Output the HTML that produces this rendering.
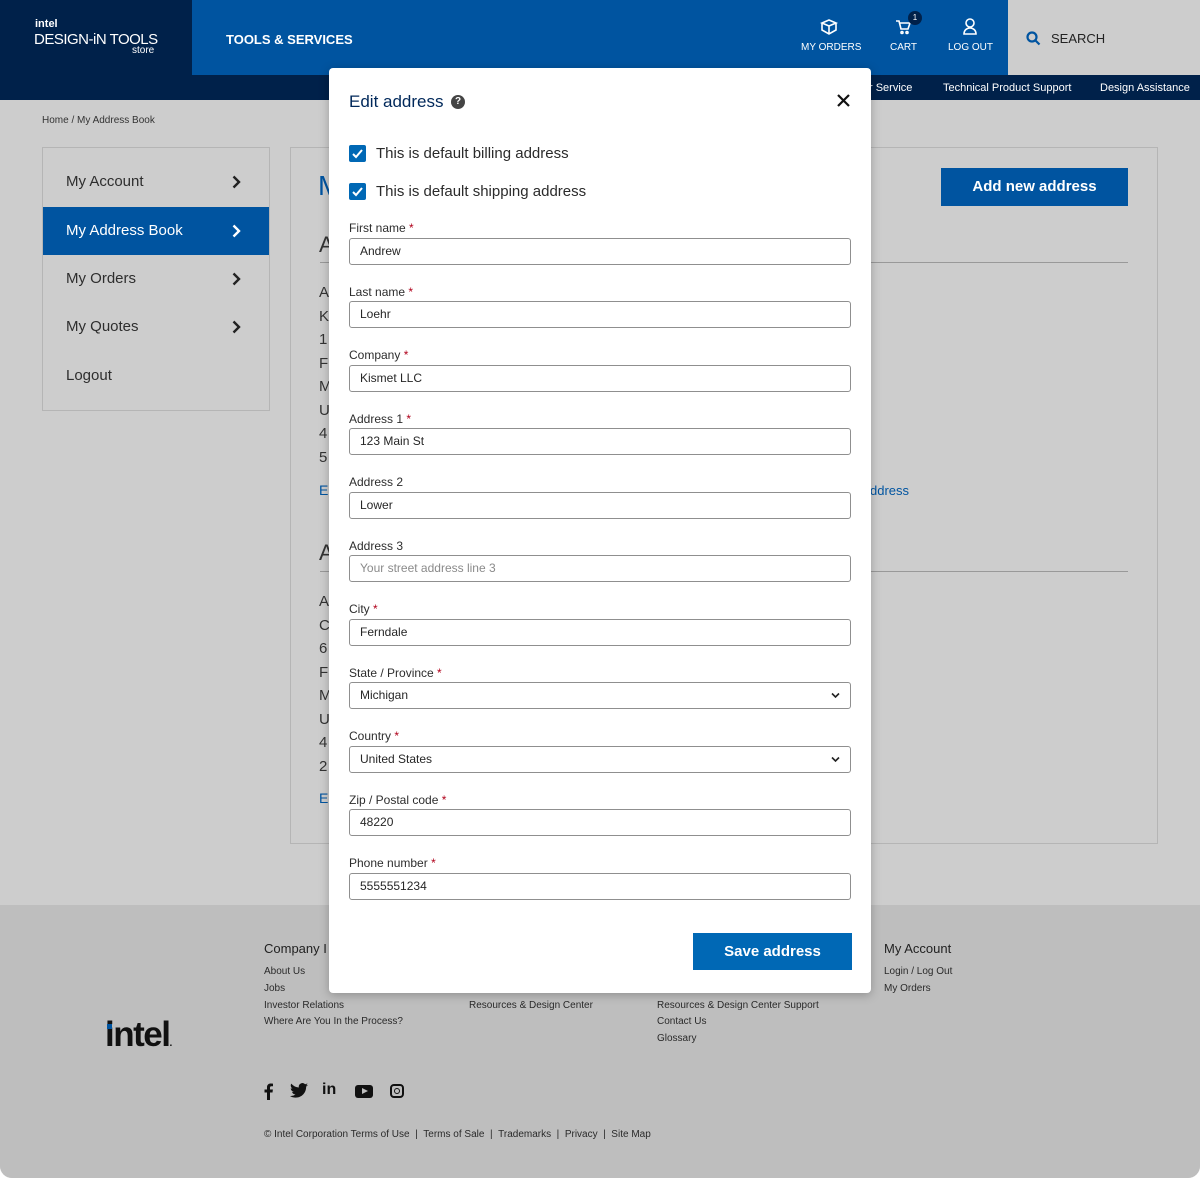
<!DOCTYPE html>
<html><head><meta charset="utf-8"><style>
*{box-sizing:border-box;margin:0;padding:0}
body{width:1200px;height:1178px;position:relative;overflow:hidden;background:#fff;font-family:"Liberation Sans",sans-serif;color:#2b2b2b}
.a{position:absolute}
.page{position:absolute;left:0;top:0;width:1200px;height:1178px;background:#cdcdcd;border-radius:0 0 12px 12px;overflow:hidden}
.t{position:absolute;white-space:nowrap}
.side div{position:absolute;left:0;width:226px;height:48px;font-size:15px;color:#2e2e2e;padding-left:23px;line-height:48px}
.chev{position:absolute;right:28px;top:17px}
.lbl{position:absolute;left:20px;font-size:12px;color:#2d2d2d}
.lbl b{color:#b0001a;font-weight:normal}
.inp{position:absolute;left:20px;width:502px;height:27px;border:1px solid #8f8f8f;border-radius:3px;font-size:12px;line-height:25px;padding-left:10px;color:#262626}
.ft{position:absolute;font-size:10px;color:#2a2a2a;white-space:nowrap}
</style></head><body>
<div class="page">
 <div class="a" style="left:0;top:0;width:1200px;height:100px;background:#00214a"></div>
 <div class="a" style="left:192px;top:0;width:816px;height:75px;background:#0054a0"></div>
 <div class="a" style="left:1008px;top:0;width:192px;height:75px;background:#cdcdcd"></div>
 <div class="t" style="left:35px;top:18px;font-size:11px;color:#fff;font-weight:bold">intel</div>
 <div class="t" style="left:34px;top:31px;font-size:15px;color:#fff;letter-spacing:-0.5px">DESIGN-iN TOOLS</div>
 <div class="t" style="left:132px;top:45px;font-size:10px;color:#fff">store</div>
 <div class="t" style="left:226px;top:32px;font-size:13px;color:#fff;font-weight:bold">TOOLS &amp; SERVICES</div>
 <svg class="a" style="left:819px;top:18px" width="20" height="18" viewBox="0 0 20 18" fill="none" stroke="#fff" stroke-width="1.6"><path d="M3 5l7-3 7 3-7 3z M3 5v7l7 4 7-4V5 M10 8v8"/></svg>
 <div class="t" style="left:801px;top:42px;font-size:10px;color:#fff">MY ORDERS</div>
 <svg class="a" style="left:895px;top:19px" width="16" height="16" viewBox="0 0 16 16" fill="none" stroke="#fff" stroke-width="1.6"><path d="M1 2h3l2 8h7l2-6H5"/><circle cx="7" cy="13.5" r="1"/><circle cx="12" cy="13.5" r="1"/></svg>
 <div class="a" style="left:908px;top:11px;width:14px;height:14px;border-radius:7px;background:#00214a;color:#fff;font-size:8px;text-align:center;line-height:14px">1</div>
 <div class="t" style="left:890px;top:42px;font-size:10px;color:#fff">CART</div>
 <svg class="a" style="left:962px;top:18px" width="16" height="18" viewBox="0 0 16 18" fill="none" stroke="#fff" stroke-width="1.6"><circle cx="8" cy="5" r="4"/><path d="M2 16c0-4 3-6 6-6s6 2 6 6z"/></svg>
 <div class="t" style="left:948px;top:42px;font-size:10px;color:#fff">LOG OUT</div>
 <svg class="a" style="left:1026px;top:31px" width="15" height="15" viewBox="0 0 15 15" fill="none" stroke="#0054a0" stroke-width="2.2"><circle cx="6" cy="6" r="4.5"/><path d="M9.5 9.5l4 4"/></svg>
 <div class="t" style="left:1051px;top:31px;font-size:13px;color:#222">SEARCH</div>
 <div class="t" style="left:869px;top:82px;font-size:11px;color:#fff">r Service</div>
 <div class="t" style="left:943px;top:82px;font-size:11px;color:#fff">Technical Product Support</div>
 <div class="t" style="left:1100px;top:82px;font-size:11px;color:#fff">Design Assistance</div>

 <div class="t" style="left:42px;top:115px;font-size:10px;color:#333">Home / My Address Book</div>
 <div class="a side" style="left:42px;top:147px;width:228px;height:264px;border:1px solid #b5b5b5">
  <div style="top:10px">My Account<svg class="chev" width="9" height="14" viewBox="0 0 9 14" fill="none" stroke="#222" stroke-width="2.4"><path d="M1.5 1.5l5.5 5.5-5.5 5.5"/></svg></div>
  <div style="top:59px;background:#0054a0;color:#fff;left:0">My Address Book<svg class="chev" width="9" height="14" viewBox="0 0 9 14" fill="none" stroke="#fff" stroke-width="2.4"><path d="M1.5 1.5l5.5 5.5-5.5 5.5"/></svg></div>
  <div style="top:107px">My Orders<svg class="chev" width="9" height="14" viewBox="0 0 9 14" fill="none" stroke="#222" stroke-width="2.4"><path d="M1.5 1.5l5.5 5.5-5.5 5.5"/></svg></div>
  <div style="top:155px">My Quotes<svg class="chev" width="9" height="14" viewBox="0 0 9 14" fill="none" stroke="#222" stroke-width="2.4"><path d="M1.5 1.5l5.5 5.5-5.5 5.5"/></svg></div>
  <div style="top:204px">Logout</div>
 </div>
 <div class="a" style="left:290px;top:147px;width:868px;height:697px;border:1px solid #b5b5b5"></div>
 <div class="t" style="left:318px;top:170px;font-size:28px;color:#0054a0">M</div>
 <div class="a" style="left:941px;top:168px;width:187px;height:38px;background:#0054a0;color:#fff;font-size:15px;font-weight:bold;text-align:center;line-height:38px">Add new address</div>
 <div class="t" style="left:319px;top:232px;font-size:22px;color:#333">A</div>
 <div class="a" style="left:320px;top:262px;width:808px;height:1px;background:#999"></div>
 <div class="t" style="left:319px;top:281px;font-size:15px;line-height:23.5px;color:#333;white-space:pre">A
K
1
F
M
U
4
5</div>
 <div class="t" style="left:319px;top:482px;font-size:14px;color:#0054a0">E</div>
 <div class="t" style="left:870px;top:483px;font-size:13px;color:#0054a0">ddress</div>
 <div class="t" style="left:319px;top:540px;font-size:22px;color:#333">A</div>
 <div class="a" style="left:320px;top:571px;width:808px;height:1px;background:#999"></div>
 <div class="t" style="left:319px;top:590px;font-size:15px;line-height:23.5px;color:#333;white-space:pre">A
C
6
F
M
U
4
2</div>
 <div class="t" style="left:319px;top:790px;font-size:14px;color:#0054a0">E</div>
 <div class="a" style="left:0;top:905px;width:1200px;height:273px;background:#bebebe"></div>
 <div class="t" style="left:264px;top:941px;font-size:13px;color:#222">Company I</div>
 <div class="ft" style="left:264px;top:966px">About Us</div>
 <div class="ft" style="left:264px;top:983px">Jobs</div>
 <div class="ft" style="left:264px;top:1000px">Investor Relations</div>
 <div class="ft" style="left:264px;top:1016px">Where Are You In the Process?</div>
 <div class="ft" style="left:469px;top:1000px">Resources &amp; Design Center</div>
 <div class="ft" style="left:657px;top:1000px">Resources &amp; Design Center Support</div>
 <div class="ft" style="left:657px;top:1016px">Contact Us</div>
 <div class="ft" style="left:657px;top:1033px">Glossary</div>
 <div class="t" style="left:884px;top:941px;font-size:13px;color:#222">My Account</div>
 <div class="ft" style="left:884px;top:966px">Login / Log Out</div>
 <div class="ft" style="left:884px;top:983px">My Orders</div>
 <div class="t" style="left:105px;top:1015px;font-size:35px;color:#111;letter-spacing:-1.5px;font-weight:bold">intel<span style="font-size:10px">.</span></div>
 <div class="a" style="left:107px;top:1024px;width:5px;height:5px;background:#0054a0"></div>
 <svg class="a" style="left:264px;top:1083px" width="9" height="17" viewBox="0 0 9 17"><path fill="#111" d="M6 17V9.5h2.5l.4-3H6V4.8c0-.9.3-1.5 1.5-1.5H9V.6A20 20 0 0 0 6.8.5C4.6.5 3 1.8 3 4.3v2.2H.5v3H3V17z"/></svg>
 <svg class="a" style="left:290px;top:1083px" width="18" height="15" viewBox="0 0 24 20"><path fill="#111" d="M24 2.4a10 10 0 0 1-2.8.8A5 5 0 0 0 23.3.5a10 10 0 0 1-3.1 1.2A4.9 4.9 0 0 0 11.8 6 14 14 0 0 1 1.7.9a4.9 4.9 0 0 0 1.5 6.6A5 5 0 0 1 1 6.9a4.9 4.9 0 0 0 3.9 4.9 5 5 0 0 1-2.2.1 4.9 4.9 0 0 0 4.6 3.4A9.9 9.9 0 0 1 0 17.3 14 14 0 0 0 7.5 19.5c9 0 14-7.5 14-14v-.6A10 10 0 0 0 24 2.4z"/></svg>
 <div class="t" style="left:322px;top:1081px;font-size:16px;color:#111;font-weight:bold">in</div>
 <div class="a" style="left:355px;top:1085px;width:18px;height:13px;background:#111;border-radius:3px"></div>
 <div class="a" style="left:362px;top:1088px;width:0;height:0;border-left:6px solid #bebebe;border-top:3.5px solid transparent;border-bottom:3.5px solid transparent"></div>
 <div class="a" style="left:390px;top:1084px;width:14px;height:14px;border:2px solid #111;border-radius:4px"></div>
 <div class="a" style="left:394px;top:1088px;width:6px;height:6px;border:1.5px solid #111;border-radius:50%"></div>
 <div class="ft" style="left:264px;top:1129px">© Intel Corporation Terms of Use &nbsp;| &nbsp;Terms of Sale &nbsp;| &nbsp;Trademarks &nbsp;| &nbsp;Privacy &nbsp;| &nbsp;Site Map</div>
</div>
<div class="a" style="left:329px;top:68px;width:542px;height:925px;background:#fff;border-radius:4px;box-shadow:0 2px 10px rgba(0,0,0,.25)">
 <div class="t" style="left:20px;top:24px;font-size:17px;color:#00285a">Edit address</div>
 <div class="a" style="left:122px;top:27px;width:14px;height:14px;border-radius:7px;background:#444;color:#fff;font-size:10px;font-weight:bold;text-align:center;line-height:14px">?</div>
 <svg class="a" style="left:508px;top:26px" width="13" height="13" viewBox="0 0 13 13" stroke="#111" stroke-width="2.2"><path d="M1 1l11 11M12 1L1 12"/></svg>
 <div class="a" style="left:20px;top:77px;width:17px;height:17px;background:#0068b5;border-radius:2px"></div>
 <svg class="a" style="left:22px;top:79px" width="13" height="13" viewBox="0 0 13 13" fill="none" stroke="#fff" stroke-width="2"><path d="M2 7l3 3 6-7"/></svg>
 <div class="t" style="left:47px;top:77px;font-size:15px;color:#2b2b2b">This is default billing address</div>
 <div class="a" style="left:20px;top:115px;width:17px;height:17px;background:#0068b5;border-radius:2px"></div>
 <svg class="a" style="left:22px;top:117px" width="13" height="13" viewBox="0 0 13 13" fill="none" stroke="#fff" stroke-width="2"><path d="M2 7l3 3 6-7"/></svg>
 <div class="t" style="left:47px;top:115px;font-size:15px;color:#2b2b2b">This is default shipping address</div>

 <div class="lbl" style="top:153px">First name <b>*</b></div><div class="inp" style="top:170px">Andrew</div>
 <div class="lbl" style="top:217px">Last name <b>*</b></div><div class="inp" style="top:233px">Loehr</div>
 <div class="lbl" style="top:280px">Company <b>*</b></div><div class="inp" style="top:297px">Kismet LLC</div>
 <div class="lbl" style="top:344px">Address 1 <b>*</b></div><div class="inp" style="top:360px">123 Main St</div>
 <div class="lbl" style="top:407px">Address 2</div><div class="inp" style="top:424px">Lower</div>
 <div class="lbl" style="top:471px">Address 3</div><div class="inp" style="top:487px;color:#8a8a8a">Your street address line 3</div>
 <div class="lbl" style="top:534px">City <b>*</b></div><div class="inp" style="top:551px">Ferndale</div>
 <div class="lbl" style="top:598px">State / Province <b>*</b></div><div class="inp" style="top:614px">Michigan<svg class="a" style="right:10px;top:9px" width="9" height="7" viewBox="0 0 9 7" fill="none" stroke="#222" stroke-width="1.6"><path d="M1 1.5l3.5 3.5 3.5-3.5"/></svg></div>
 <div class="lbl" style="top:661px">Country <b>*</b></div><div class="inp" style="top:678px">United States<svg class="a" style="right:10px;top:9px" width="9" height="7" viewBox="0 0 9 7" fill="none" stroke="#222" stroke-width="1.6"><path d="M1 1.5l3.5 3.5 3.5-3.5"/></svg></div>
 <div class="lbl" style="top:725px">Zip / Postal code <b>*</b></div><div class="inp" style="top:741px">48220</div>
 <div class="lbl" style="top:788px">Phone number <b>*</b></div><div class="inp" style="top:805px">5555551234</div>
 <div class="a" style="left:364px;top:865px;width:159px;height:37px;background:#0068b5;color:#fff;font-size:15px;font-weight:bold;text-align:center;line-height:37px">Save address</div>
</div>
</body></html>
